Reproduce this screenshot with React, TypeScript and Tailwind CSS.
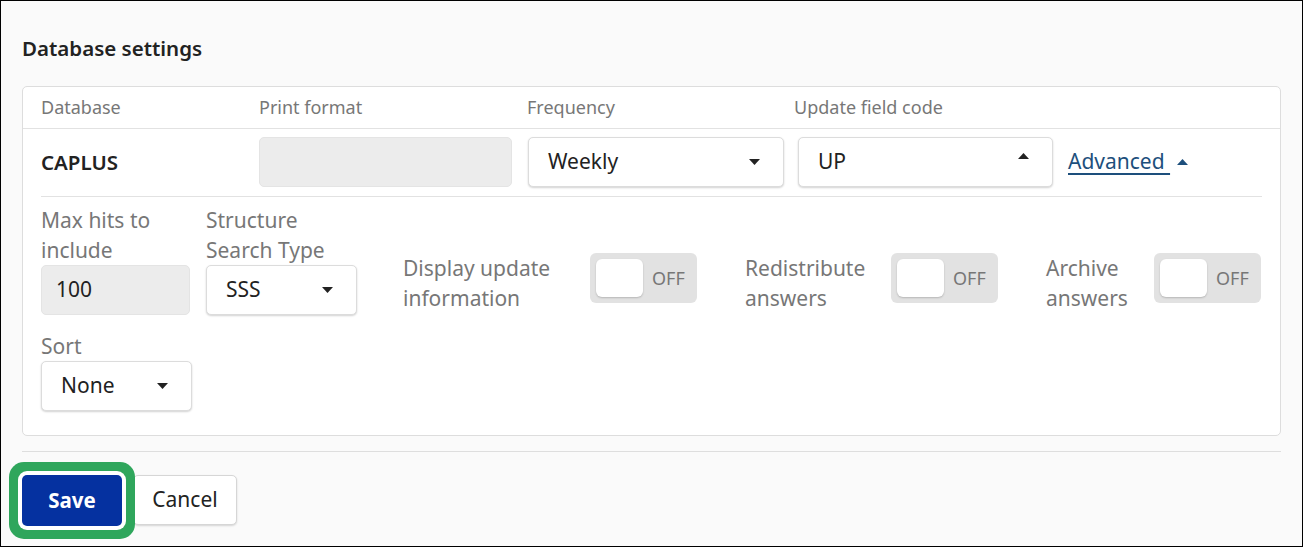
import React from "react";

function Caret({ up = false, className = "" }: { up?: boolean; className?: string }) {
  return (
    <svg width="11" height="6" viewBox="0 0 11 6" className={className}>
      {up ? <path d="M0 6 L5.5 0 L11 6 Z" fill="currentColor" /> : <path d="M0 0 L11 0 L5.5 6 Z" fill="currentColor" />}
    </svg>
  );
}

function Select({ value, width, up = false }: { value: string; width: string; up?: boolean }) {
  return (
    <div
      className={`${width} h-[50px] flex items-center justify-between pl-[19px] pr-[23px] bg-white border border-[#dcdcdc] rounded-[5px] shadow-[0_1px_2px_rgba(0,0,0,0.18)] text-[21px] text-[#222]`}
    >
      <span>{value}</span>
      <Caret up={up} className={`text-[#222] ${up ? "-mt-[12px]" : ""}`} />
    </div>
  );
}

function Toggle() {
  return (
    <div className="w-[107px] h-[50px] shrink-0 rounded-[6px] bg-[#e2e2e2] flex items-center pl-[6px] gap-[9px]">
      <div className="w-[47px] h-[38px] rounded-[6px] bg-white shadow-[0_1px_2px_rgba(0,0,0,0.2)]" />
      <span className="text-[18px] text-[#777]">OFF</span>
    </div>
  );
}

function ToggleField({ label, labelWidth }: { label: string; labelWidth: string }) {
  return (
    <div className="flex items-start mt-[48px]">
      <div className={`${labelWidth} text-[21px] leading-[30px] text-[#777]`}>{label}</div>
      <Toggle />
    </div>
  );
}

export default function App() {
  return (
    <div className="w-[1303px] h-[547px] border border-black bg-[#fafafa] font-['Noto_Sans',sans-serif] text-[#222] px-[21px] pt-[33px]">
      <h2 className="text-[20.5px] leading-[28px] font-semibold text-[#222]">Database settings</h2>

      {/* Card */}
      <div className="mt-[24px] bg-white border border-[#dddddd] rounded-[5px]">
        {/* Header */}
        <div className="h-[42px] flex items-center border-b border-[#e2e2e2] pl-[18px] text-[18px] text-[#777]">
          <div className="w-[218px]">Database</div>
          <div className="w-[268px]">Print format</div>
          <div className="w-[267px]">Frequency</div>
          <div>Update field code</div>
        </div>

        {/* Row */}
        <div className="mx-[18px] pt-[8px] pb-[9px] border-b border-[#e2e2e2] flex items-center">
          <div className="w-[218px] text-[20.5px] font-semibold text-[#222]">CAPLUS</div>
          <div className="w-[253px] h-[50px] rounded-[5px] bg-[#ececec] border border-[#e4e4e4]" />
          <div className="ml-[16px]">
            <Select value="Weekly" width="w-[256px]" />
          </div>
          <div className="ml-[14px]">
            <Select value="UP" width="w-[255px]" up />
          </div>
          <a className="ml-[15px] flex items-center text-[21px] text-[#1d4f7c] underline underline-offset-[4px] decoration-[1.5px]">
            Advanced&nbsp;
          </a>
          <Caret up className="ml-[7px] text-[#1d4f7c]" />
        </div>

        {/* Advanced */}
        <div className="px-[18px] pt-[8px] pb-[24px]">
          <div className="flex items-start">
            <div className="w-[149px]">
              <div className="text-[21px] leading-[30px] text-[#777]">
                Max hits to
                <br />
                include
              </div>
              <div className="h-[50px] rounded-[5px] bg-[#ececec] border border-[#e4e4e4] flex items-center pl-[14px] text-[21px] text-[#222]">
                100
              </div>
            </div>
            <div className="ml-[16px] w-[151px]">
              <div className="text-[21px] leading-[30px] text-[#777]">
                Structure
                <br />
                Search Type
              </div>
              <Select value="SSS" width="w-[151px]" />
            </div>
            <div className="ml-[46px]">
              <ToggleField label="Display update information" labelWidth="w-[187px]" />
            </div>
            <div className="ml-[48px]">
              <ToggleField label="Redistribute answers" labelWidth="w-[146px]" />
            </div>
            <div className="ml-[48px]">
              <ToggleField label="Archive answers" labelWidth="w-[108px]" />
            </div>
          </div>

          <div className="mt-[16px] w-[151px]">
            <div className="text-[21px] leading-[30px] text-[#777]">Sort</div>
            <Select value="None" width="w-[151px]" />
          </div>
        </div>
      </div>

      <div className="mt-[15px] border-t border-[#dedede]" />

      {/* Actions */}
      <div className="mt-[23px] flex items-start">
        <button className="relative z-10 w-[100px] h-[51px] rounded-[5px] bg-[#0531a0] text-white text-[20.5px] font-bold shadow-[0_0_0_4px_#ffffff,0_0_0_13px_#2fa65c]">
          Save
        </button>
        <button className="ml-[11px] w-[104px] h-[50px] rounded-[5px] bg-white border border-[#d6d6d6] shadow-[0_1px_2px_rgba(0,0,0,0.15)] text-[21px] text-[#222]">
          Cancel
        </button>
      </div>
    </div>
  );
}
